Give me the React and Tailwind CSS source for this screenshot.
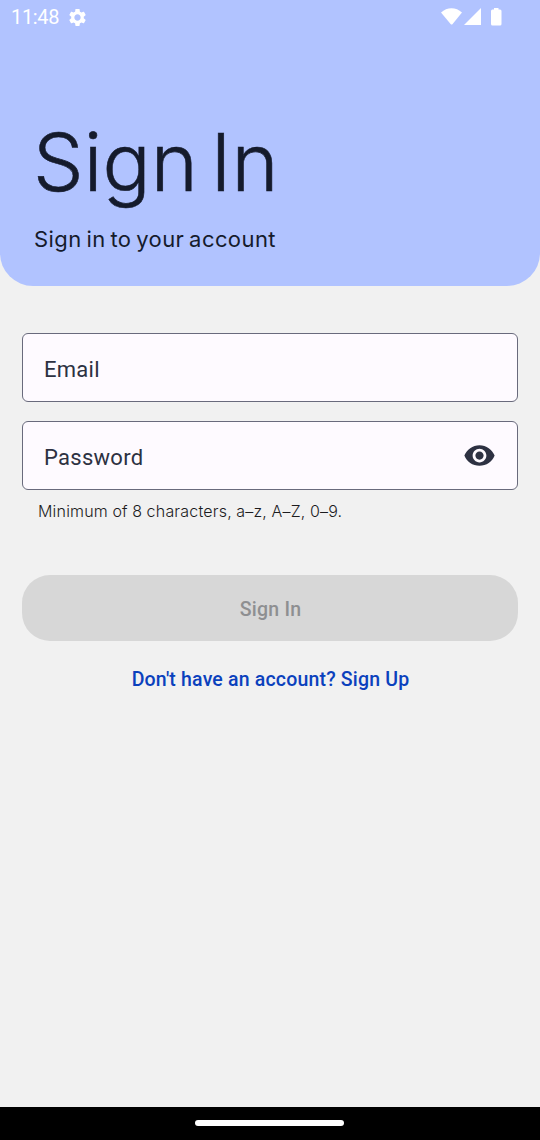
function StatusBar() {
  return (
    <div className="flex h-[34px] items-center pl-[11px] pr-[37px] text-white">
      <span className="w-[49px] font-['Roboto',sans-serif] text-[20px] font-normal leading-[34px] tracking-[-0.35px]">11:48</span>
      <svg viewBox="0 0 24 24" className="ml-[7px] size-[21px]" fill="currentColor">
        <path d="M19.14 12.94c.04-.3.06-.61.06-.94 0-.32-.02-.64-.07-.94l2.03-1.58c.18-.14.23-.41.12-.61l-1.92-3.32c-.12-.22-.37-.29-.59-.22l-2.39.96c-.5-.38-1.03-.7-1.62-.94l-.36-2.54c-.04-.24-.24-.41-.48-.41h-3.84c-.24 0-.43.17-.47.41l-.36 2.54c-.59.24-1.13.57-1.62.94l-2.39-.96c-.22-.08-.47 0-.59.22L2.74 8.87c-.12.21-.08.47.12.61l2.03 1.58c-.05.3-.09.63-.09.94s.02.64.07.94l-2.03 1.58c-.18.14-.23.41-.12.61l1.92 3.32c.12.22.37.29.59.22l2.39-.96c.5.38 1.03.7 1.62.94l.36 2.54c.05.24.24.41.48.41h3.84c.24 0 .44-.17.47-.41l.36-2.54c.59-.24 1.13-.56 1.62-.94l2.39.96c.22.08.47 0 .59-.22l1.92-3.32c.12-.22.07-.47-.12-.61l-2.01-1.58zM12 15.6c-1.98 0-3.6-1.62-3.6-3.6s1.62-3.6 3.6-3.6 3.6 1.62 3.6 3.6-1.62 3.6-3.6 3.6z" />
      </svg>
      <svg viewBox="0 0 62 20" className="ml-auto h-5 w-[62px]" fill="currentColor">
        <path d="M0 5.600C6-.1 15-.1 21 5.600L11.600 17q-1 1-2 0Z" />
        <path d="M40 1v17H23Z" />
        <path d="M53 2.500V1h4.500v1.500h1.500q1.500 0 1.500 1.500v13q0 1.500-1.500 1.500h-7.500q-1.500 0-1.500-1.500V4q0-1.500 1.500-1.500Z" />
      </svg>
    </div>
  );
}

function EyeIcon() {
  return (
    <svg viewBox="0 0 24 24" className="size-[33px]" fill="#2d3142">
      <path d="M12 4.500C7 4.500 2.730 7.610 1 12c1.730 4.390 6 7.500 11 7.500s9.270-3.110 11-7.500c-1.730-4.390-6-7.500-11-7.500zM12 17c-2.760 0-5-2.240-5-5s2.240-5 5-5 5 2.240 5 5-2.240 5-5 5zm0-8c-1.660 0-3 1.340-3 3s1.340 3 3 3 3-1.340 3-3-1.340-3-3-3z" />
    </svg>
  );
}

function Field({ label, children }) {
  return (
    <div className="flex h-[69px] items-center justify-between rounded-[6px] border border-[#696a7c] bg-[#fefaff] pl-[21px] pr-[21px]">
      <span className="pt-[5px] font-['Roboto',sans-serif] text-[22px] font-normal leading-7 tracking-[0.28px] text-[#2d3142]">{label}</span>
      {children}
    </div>
  );
}

export default function App() {
  return (
    <div className="flex h-[1140px] w-[540px] flex-col overflow-hidden bg-[#f1f1f1]">
      <header className="h-[286px] rounded-b-[33px] bg-[#b1c3ff] text-[#151b2c]">
        <StatusBar />
        <h1 className="mt-[80px] pl-[33px] font-['Inter',sans-serif] text-[80px] font-light leading-[96px] tracking-[0.1px] [-webkit-text-stroke:0.6px_#151b2c] [word-spacing:-10px] whitespace-nowrap">Sign In</h1>
        <p className="mt-[14px] pl-[34px] font-['Inter',sans-serif] text-[22px] leading-[30px] tracking-[0.42px] [word-spacing:-1.800px] whitespace-nowrap">Sign in to your account</p>
      </header>
      <main className="flex flex-1 flex-col px-[22px] pt-[47px]">
        <Field label="Email" />
        <div className="h-[19px]" />
        <Field label="Password">
          <EyeIcon />
        </Field>
        <p className="mt-[9px] pl-4 font-['Inter',sans-serif] text-[16px] font-light leading-6 tracking-[0.2px] [word-spacing:-0.300px] whitespace-nowrap text-[#1c1c1e]">Minimum of 8 characters, a–z, A–Z, 0–9.</p>
        <button className="mt-[52px] h-[66px] rounded-[28px] bg-[#d7d7d7] pl-[1px] pt-[3px] font-['Roboto',sans-serif] text-[19.500px] font-medium tracking-[0.25px] text-[#8e8f91]">Sign In</button>
        <a className="mt-[25px] pl-[1px] text-center font-['Roboto',sans-serif] text-[19.500px] font-medium leading-[27px] tracking-[0.18px] text-[#0b41bd]">Don't have an account? Sign Up</a>
      </main>
      <footer className="flex h-[33px] justify-center bg-black pr-[1px] pt-[13px]">
        <div className="h-[6px] w-[149px] rounded-full bg-white" />
      </footer>
    </div>
  );
}
